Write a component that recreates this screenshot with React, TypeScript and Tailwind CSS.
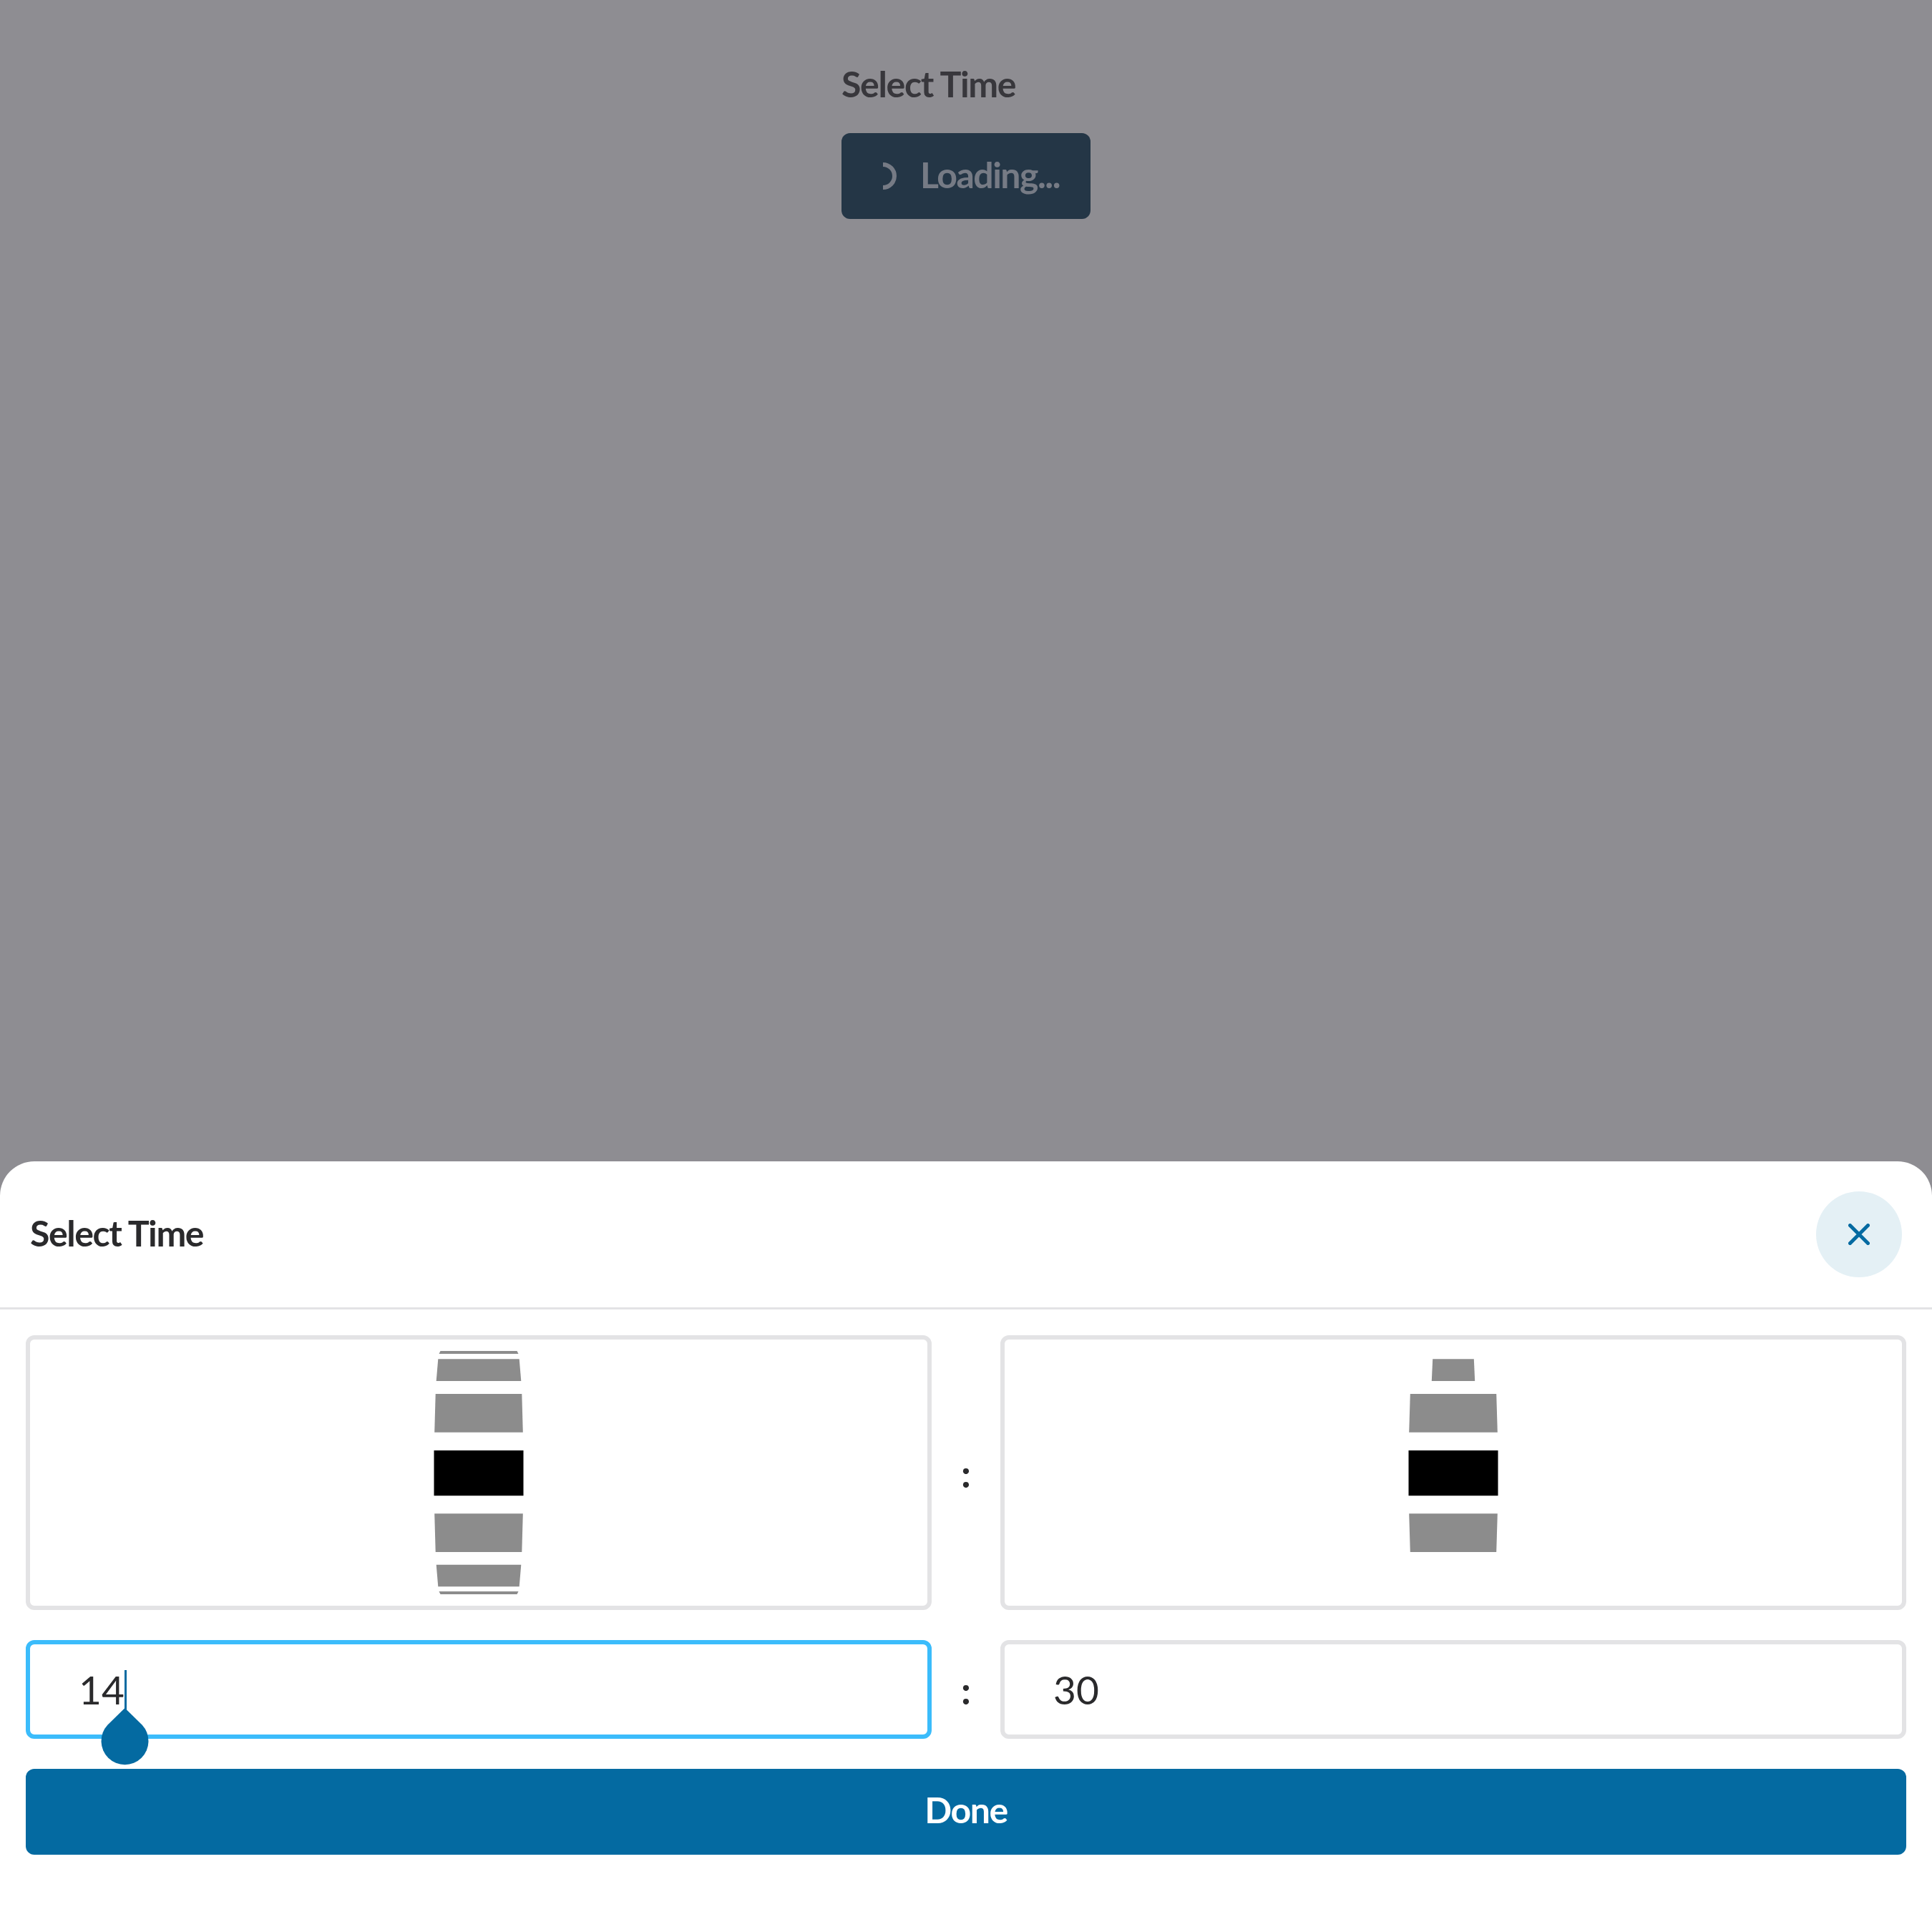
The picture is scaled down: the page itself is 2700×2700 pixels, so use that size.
const lato = 'font-["Lato",sans-serif]';

type Bar = { top: number; bottom: number; topHalf: number; bottomHalf: number; fill: string };

const hourBars: Bar[] = [
  { top: -170, bottom: -166, topHalf: 53.5, bottomHalf: 55.5, fill: "#8c8c8c" },
  { top: -158.7, bottom: -128, topHalf: 56.7, bottomHalf: 59.3, fill: "#8c8c8c" },
  { top: -110, bottom: -56.3, topHalf: 60.3, bottomHalf: 61.8, fill: "#8c8c8c" },
  { top: -31, bottom: 32.3, topHalf: 62.5, bottomHalf: 62.5, fill: "#000000" },
  { top: 57.3, bottom: 111, topHalf: 61.8, bottomHalf: 60.3, fill: "#8c8c8c" },
  { top: 128.7, bottom: 159.3, topHalf: 59.3, bottomHalf: 56.7, fill: "#8c8c8c" },
  { top: 166, bottom: 170, topHalf: 55.5, bottomHalf: 53.5, fill: "#8c8c8c" },
];

const minuteBars: Bar[] = [
  { top: -158.7, bottom: -128, topHalf: 28.8, bottomHalf: 30.2, fill: "#8c8c8c" },
  { top: -110, bottom: -56.3, topHalf: 60.2, bottomHalf: 61.8, fill: "#8c8c8c" },
  { top: -31, bottom: 32.3, topHalf: 62.5, bottomHalf: 62.5, fill: "#000000" },
  { top: 57.3, bottom: 111, topHalf: 61.8, bottomHalf: 60.2, fill: "#8c8c8c" },
];

function Wheel({ bars }: { bars: Bar[] }) {
  return (
    <div className="h-[384px] flex items-center justify-center border-[6px] border-[#e3e3e5] rounded-xl bg-white">
      <svg width="130" height="372" viewBox="-65 -186 130 372">
        {bars.map((b, i) => (
          <polygon
            key={i}
            fill={b.fill}
            points={`${-b.topHalf},${b.top} ${b.topHalf},${b.top} ${b.bottomHalf},${b.bottom} ${-b.bottomHalf},${b.bottom}`}
          />
        ))}
      </svg>
    </div>
  );
}

function Colon() {
  return <div className={`${lato} flex items-center justify-center text-[54px] font-bold text-[#2a2a2c]`}>:</div>;
}

export default function App() {
  return (
    <div className={`${lato} w-[2700px] h-[2700px] flex flex-col bg-[#8e8d92]`}>
      <div className="w-[348px] mx-auto flex-1">
        <h1 className="mt-[89px] text-[50px] leading-[56px] font-bold tracking-[-1.3px] text-[#38373c]">Select Time</h1>
        <button className="mt-[41px] w-full h-[120px] rounded-xl bg-[#243646] flex items-center pl-[58px] gap-[32px] text-[50px] font-bold tracking-[-1.5px] text-[#767b85]">
          <svg width="20" height="38" viewBox="0 0 20 38" fill="none">
            <path d="M0 3A16 16 0 0 1 0 35" stroke="#767b85" strokeWidth="6" />
          </svg>
          <span className="pb-[4px]">Loading...</span>
        </button>
      </div>

      <div className="h-[1077px] bg-white rounded-t-[48px]">
        <div className="h-[207px] flex items-center justify-between px-[42px] border-b-[3px] border-[#e3e3e5]">
          <span className="text-[50px] font-bold tracking-[-1.4px] text-[#2a2a2c] pb-[3px]">Select Time</span>
          <button className="w-[120px] h-[120px] rounded-full bg-[#e4f0f5] flex items-center justify-center">
            <svg width="30" height="30" viewBox="0 0 30 30" fill="none" stroke="#046aa1" strokeWidth="5" strokeLinecap="round">
              <path d="M2.5 2.5L27.5 27.5M27.5 2.5L2.5 27.5" />
            </svg>
          </button>
        </div>

        <div className="px-[36px] pt-[36px] flex flex-col gap-[42px]">
          <div className="grid grid-cols-[1fr_96px_1fr]">
            <Wheel bars={hourBars} />
            <Colon />
            <Wheel bars={minuteBars} />
          </div>

          <div className="grid grid-cols-[1fr_96px_1fr]">
            <div className="relative h-[138px] flex items-center pl-[68px] border-[6px] border-[#3bbcfb] rounded-xl text-[55px] text-[#2a2a2c]">
              14
              <svg className="absolute left-[98px] top-[36px] overflow-visible" width="68" height="132" viewBox="-34 0 68 132">
                <rect x="0" y="0" width="3" height="56" fill="#046aa1" />
                <path d="M0.5 53L24.5 76.5A33 33 0 1 1 -23.5 76.5Z" fill="#046aa1" />
              </svg>
            </div>
            <Colon />
            <div className="h-[138px] flex items-center pl-[68px] border-[6px] border-[#e3e3e5] rounded-xl text-[55px] text-[#2a2a2c]">
              30
            </div>
          </div>

          <button className="h-[120px] rounded-xl bg-[#046aa1] text-white text-[50px] font-bold tracking-[-1.4px] pb-[5px]">Done</button>
        </div>
      </div>
    </div>
  );
}
